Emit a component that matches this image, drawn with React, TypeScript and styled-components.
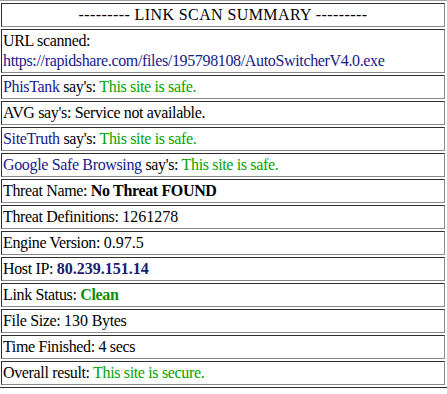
import styled, { createGlobalStyle } from "styled-components";

const GlobalStyle = createGlobalStyle`
	html, body {
		margin: 0;
		padding: 0;
		background: #fff;
	}
	body {
		font-family: "Liberation Serif", "Times New Roman", serif;
		font-size: 16px;
		color: #000;
		overflow: hidden;
	}
`;

const Wrap = styled.div`
	margin-left: -2px;
	width: 450px;
`;

const SummaryTable = styled.table`
	width: 100%;
	border-collapse: separate;
	border-spacing: 2px;
	border-width: 1px;
	border-style: solid;
	border-color: #a0a0a0 #2e2e2e #2e2e2e #a0a0a0;

	td {
		padding: 1px;
		line-height: 20px;
		letter-spacing: -0.35px;
		border-width: 1px;
		border-style: solid;
		border-color: #2e2e2e #8a8a8a #8a8a8a #2e2e2e;
		vertical-align: top;
	}
`;

const HeaderCell = styled.td`
	text-align: center;
	&& {
		letter-spacing: 0.4px;
	}
`;

// digits render at about their normal width in the original
const Num = styled.span`
	letter-spacing: 0;
`;

const Blue = styled.span`
	color: #17208c;
`;

const Green = styled.span<{ $bold?: boolean }>`
	color: ${(p) => (p.$bold ? "#0a8f0a" : "#00a400")};
	font-weight: ${(p) => (p.$bold ? 700 : 400)};
`;

const Strong = styled.b<{ $blue?: boolean }>`
	color: ${(p) => (p.$blue ? "#17206e" : "#000")};
`;

const App = (): JSX.Element => {
	return (
		<>
			<GlobalStyle />
			<Wrap>
				<SummaryTable>
					<tbody>
						<tr>
							<HeaderCell>--------- LINK SCAN SUMMARY ---------</HeaderCell>
						</tr>
						<tr>
							<td>
								URL scanned:
								<br />
								<Blue>https://rapidshare.com/files/195798108/AutoSwitcherV4.0.exe</Blue>
							</td>
						</tr>
						<tr>
							<td>
								<Blue>PhisTank</Blue> say's: <Green>This site is safe.</Green>
							</td>
						</tr>
						<tr>
							<td>AVG say's: Service not available.</td>
						</tr>
						<tr>
							<td>
								<Blue>SiteTruth</Blue> say's: <Green>This site is safe.</Green>
							</td>
						</tr>
						<tr>
							<td>
								<Blue>Google Safe Browsing</Blue> say's: <Green>This site is safe.</Green>
							</td>
						</tr>
						<tr>
							<td>
								Threat Name: <Strong>No Threat FOUND</Strong>
							</td>
						</tr>
						<tr>
							<td>
								Threat Definitions: <Num>1261278</Num>
							</td>
						</tr>
						<tr>
							<td>
								Engine Version: <Num>0.97.5</Num>
							</td>
						</tr>
						<tr>
							<td>
								Host IP:{" "}
								<Strong $blue>
									<Num>80.239.151.14</Num>
								</Strong>
							</td>
						</tr>
						<tr>
							<td>
								Link Status: <Green $bold>Clean</Green>
							</td>
						</tr>
						<tr>
							<td>
								File Size: <Num>130</Num> Bytes
							</td>
						</tr>
						<tr>
							<td>Time Finished: 4 secs</td>
						</tr>
						<tr>
							<td>
								Overall result: <Green>This site is secure.</Green>
							</td>
						</tr>
					</tbody>
				</SummaryTable>
			</Wrap>
		</>
	);
};

export default App;
